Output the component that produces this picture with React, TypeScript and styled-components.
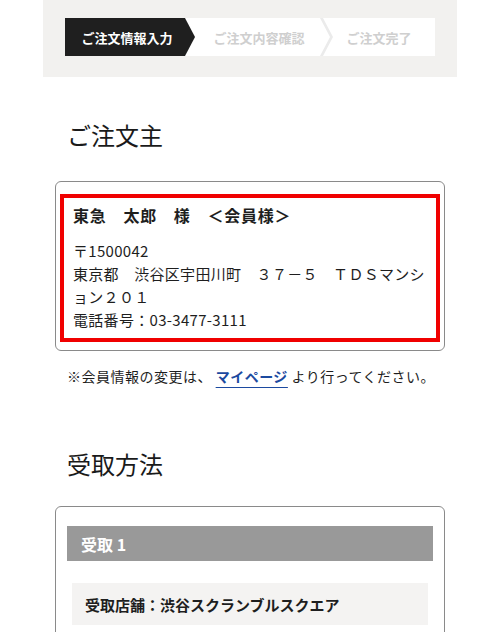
import React from 'react';
import styled, { createGlobalStyle } from 'styled-components';

const GlobalStyle = createGlobalStyle`
  body {
    margin: 0;
    background: #ffffff;
    font-family: 'Noto Sans CJK JP', 'Noto Sans', sans-serif;
    color: #1e1e1e;
  }
`;

const Page = styled.div`
  width: 500px;
  height: 632px;
  overflow: hidden;
`;

const Header = styled.div`
  margin: 0 43px;
  padding: 18px 22px 21px;
  background-color: #f2f1ef;
`;

const Stepper = styled.ol`
  display: grid;
  grid-template-columns: 130px 128px 112px;
  height: 38px;
  margin: 0;
  padding: 0;
  list-style: none;
  background-color: #ffffff;
`;

const Step = styled.li<{ active?: boolean; chevron?: boolean }>`
  position: relative;
  display: flex;
  align-items: center;
  justify-content: center;
  font-size: 13px;
  font-weight: 700;
  color: ${({ active }) => (active ? '#ffffff' : '#cfcfcf')};
  background-color: ${({ active }) => (active ? '#1f1f1f' : 'transparent')};
  padding-right: ${({ active }) => (active ? '6px' : '0')};
  clip-path: ${({ active }) =>
    active
      ? 'polygon(0 0, calc(100% - 10px) 0, 100% 50%, calc(100% - 10px) 100%, 0 100%)'
      : 'none'};
  &::after {
    content: '';
    display: ${({ chevron }) => (chevron ? 'block' : 'none')};
    position: absolute;
    top: 0;
    right: -10px;
    width: 13px;
    height: 100%;
    background-color: #ebebeb;
    clip-path: polygon(0 0, 3px 0, 13px 50%, 3px 100%, 0 100%, 10px 50%);
  }
`;

const Main = styled.main`
  padding: 0 55px;
`;

const SectionTitle = styled.h2<{ top: number; bottom: number }>`
  margin: ${({ top }) => top}px 0 ${({ bottom }) => bottom}px;
  padding-left: 12px;
  font-size: 24px;
  line-height: 36px;
  font-weight: 400;
  color: #1a1a1a;
`;

const Card = styled.div<{ pad: string }>`
  border: 1px solid #8a8a8a;
  border-radius: 6px;
  padding: ${({ pad }) => pad};
  background: #ffffff;
`;

const Highlight = styled.div`
  border: 4px solid #f00000;
  padding: 5px 9px 7px;
`;

const Name = styled.div`
  margin-bottom: 12px;
  font-size: 16px;
  line-height: 24px;
  font-weight: 700;
  letter-spacing: 0.8px;
  white-space: pre;
`;

const AddressLine = styled.div`
  font-size: 15px;
  line-height: 23px;
  letter-spacing: 0.3px;
`;

const Note = styled.p`
  margin: 13px 0 0;
  padding-left: 12px;
  font-size: 14px;
  line-height: 24px;
  letter-spacing: 0.5px;
`;

const Link = styled.a`
  color: #1c4aa0;
  font-weight: 700;
  text-decoration: underline;
  text-decoration-thickness: 1px;
  text-underline-offset: 5px;
`;

const Bar = styled.div`
  height: 35px;
  display: flex;
  align-items: center;
  padding-left: 14px;
  background-color: #999999;
  color: #ffffff;
  font-size: 16px;
  font-weight: 700;
`;

const Store = styled.div`
  margin: 22px 5px 0;
  height: 42px;
  display: flex;
  align-items: center;
  padding-left: 13px;
  background-color: #f4f3f2;
  font-size: 15px;
  font-weight: 700;
`;

const App = () => {
  return (
    <Page>
      <GlobalStyle />
      <Header>
        <Stepper>
          <Step active>ご注文情報入力</Step>
          <Step chevron>ご注文内容確認</Step>
          <Step>ご注文完了</Step>
        </Stepper>
      </Header>
      <Main>
        <SectionTitle top={40} bottom={28}>
          ご注文主
        </SectionTitle>
        <Card pad="12px 4px 8px">
          <Highlight>
            <Name>東急　太郎　様　＜会員様＞</Name>
            <AddressLine>〒1500042</AddressLine>
            <AddressLine>
              東京都　渋谷区宇田川町　３７－５　ＴＤＳマンション２０１
            </AddressLine>
            <AddressLine>電話番号：03-3477-3111</AddressLine>
          </Highlight>
        </Card>
        <Note>
          ※会員情報の変更は、 <Link href="#">マイページ</Link> より行ってください。
        </Note>
        <SectionTitle top={58} bottom={24}>
          受取方法
        </SectionTitle>
        <Card pad="19px 11px 40px">
          <Bar>受取 1</Bar>
          <Store>受取店舗：渋谷スクランブルスクエア</Store>
        </Card>
      </Main>
    </Page>
  );
};

export default App;
